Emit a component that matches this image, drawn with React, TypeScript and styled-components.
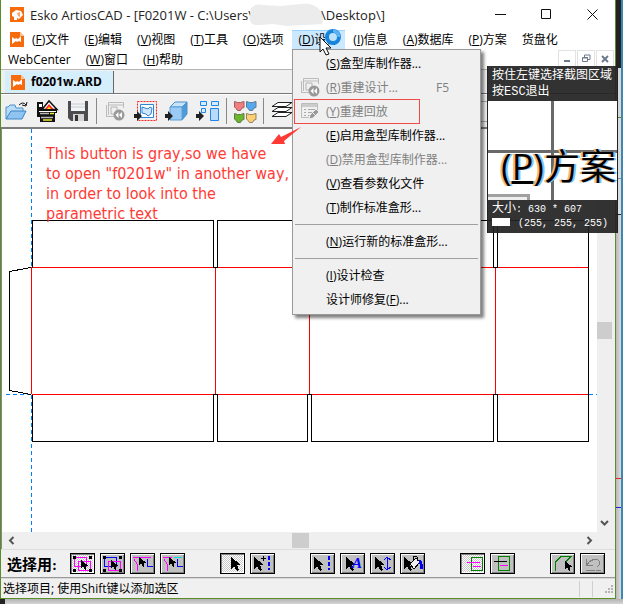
import React from "react";
import styled, { createGlobalStyle, css } from "styled-components";

const UI = '"Open Sans", "Noto Sans CJK SC", sans-serif';
const SONG = '"Liberation Serif", "Noto Sans CJK SC", serif';
const GREEN = "#5b8c2a";

const Global = createGlobalStyle`
  * { box-sizing: border-box; }
  body { margin: 0; background: #c4c4c4; font-family: ${UI}; font-size: 12px; color: #000; }
  button { font: inherit; color: inherit; background: none; border: 0; padding: 0; margin: 0; }
  svg { display: block; flex: none; }
  u { text-underline-offset: 1px; }
`;

const Desktop = styled.div`
  position: relative;
  display: grid;
  grid-template-columns: minmax(0, 1fr) 7px;
  grid-template-rows: minmax(0, 1fr) 5px;
  min-height: 100vh;
  overflow: hidden;
`;

const Win = styled.main`
  display: flex;
  flex-direction: column;
  background: #fff;
  border: solid ${GREEN};
  border-width: 0 1px 1px 1px;
`;

const Behind = styled.div`
  display: flex;
  flex-direction: column;
  border-right: 2px solid #3c88b4;
`;

const BehindPart = styled.div<{ $h?: number; $bg: string; $line?: string }>`
  ${(p) => (p.$h ? css`height: ${p.$h}px;` : css`flex: 1;`)}
  background: ${(p) => p.$bg};
  border-bottom: 1px solid ${(p) => p.$line || "transparent"};
`;

const Beneath = styled.div`
  grid-column: 1 / -1;
  background: linear-gradient(#b4b4b4, #d4d4d4);
  border-left: 5px solid #222;
`;

const TitleBar = styled.header`
  display: flex;
  align-items: center;
  height: 29px;
  padding-left: 9px;
`;

const TitleText = styled.h1`
  display: flex;
  align-items: center;
  flex: 1;
  margin: 0 0 0 6px;
  font-size: 13px;
  font-weight: 400;
  line-height: 20px;
  white-space: pre;
  color: #222;
  svg { margin: 0 -4px 0 -4px; }
`;

const Caption = styled.div`
  display: flex;
  button {
    display: grid;
    place-items: center;
    width: 46px;
    height: 28px;
  }
`;

const MenuArea = styled.div`
  display: flex;
  align-items: flex-end;
  height: 40px;
`;

const MenuBar = styled.nav`
  flex: 1;
  min-width: 0;
  height: 40px;
`;

const MenuRow = styled.div`
  display: flex;
  align-items: center;
  gap: 1px;
  height: 20px;
`;

const AppMark = styled.span`
  padding-left: 9px;
`;

const MenuButton = styled.button<{ $open?: boolean }>`
  height: 19px;
  padding: 0 7px;
  line-height: 18px;
  white-space: nowrap;
  border: 1px solid transparent;
  border-width: 1px 0 0;
  ${(p) => p.$open && css`background: #cce8ff; border-color: #99d1ff;`}
`;

const MdiButtons = styled.div`
  display: flex;
  gap: 1px;
  padding: 0 1px 2px 0;
  button {
    display: grid;
    place-items: center;
    width: 18px;
    height: 17px;
    border: 1px solid #e2e2e2;
  }
`;

const TabStrip = styled.div`
  display: flex;
  align-items: flex-end;
  height: 25px;
  padding-left: 4px;
  background: #f0f0f0;
  border-top: 1px solid #b4b4b4;
  border-bottom: 1px solid #777;
`;

const Tab = styled.button`
  display: flex;
  align-items: center;
  gap: 6px;
  height: 22px;
  padding: 0 11px 0 6px;
  background: #d5eefc;
  border-right: 1px solid #666;
  font-weight: 700;
  line-height: 20px;
`;

const ToolBar = styled.div`
  display: flex;
  align-items: center;
  gap: 7px;
  height: 35px;
  padding: 0 3px;
  background: #f0f0f0;
  border-top: 1px solid #fff;
  border-bottom: 2px solid #7c7c7c;
  overflow: hidden;
`;

const Tool = styled.button`
  display: grid;
  place-items: center;
  flex: none;
  width: 24px;
  height: 24px;
`;

const ToolRule = styled.span`
  flex: none;
  width: 1px;
  height: 26px;
  margin: 0 -1px;
  background: #888;
`;

const Spacer = styled.span`
  flex: 1;
`;

const ZoomBox = styled.select`
  width: 134px;
  height: 21px;
  border: 1px solid #aaa;
  background: #f0f0f0;
`;

const Work = styled.section`
  display: flex;
  flex: 1;
  min-height: 300px;
  border-left: 1px solid #888;
`;

const Sheet = styled.svg`
  flex: 1;
  width: 0;
  min-width: 0;
  background: #fff;
  shape-rendering: crispEdges;
`;

const VScroll = styled.div`
  display: flex;
  flex-direction: column;
  align-items: center;
  width: 18px;
  padding: 14px 3px 0 0;
  background: #efefef;
`;

const HScroll = styled.div`
  display: flex;
  align-items: center;
  justify-content: space-between;
  height: 17px;
  padding: 0 22px 0 6px;
  background: #efefef;
  border-left: 1px solid #888;
`;

const Thumb = styled.div<{ $v?: boolean }>`
  width: ${(p) => (p.$v ? 15 : 17)}px;
  height: ${(p) => (p.$v ? 17 : 15)}px;
  background: #cdcdcd;
`;

const Palette = styled.div`
  display: flex;
  align-items: center;
  height: 29px;
  padding-left: 6px;
  background: #f0f0f0;
  border-top: 1px solid #ddd;
  border-bottom: 1px solid #999;
  overflow: hidden;
`;

const PaletteLabel = styled.span`
  flex: none;
  width: 63px;
  font: 700 15px ${SONG};
`;

const Group = styled.div`
  display: flex;
  flex: none;
  gap: 5px;
  margin-right: 35px;
`;

const Pick = styled.button<{ $on?: boolean }>`
  width: 25px;
  height: 21px;
  border: 1px solid #000;
  background: ${(p) =>
    p.$on ? "repeating-conic-gradient(#c8c8c8 0 25%, #fff 0 50%) 0 0 / 2px 2px" : "#c0c0c0"};
  box-shadow: inset 1px 1px ${(p) => (p.$on ? "#808080" : "#fff")},
    inset -1px -1px ${(p) => (p.$on ? "#fff" : "#808080")};
`;

const StatusBar = styled.footer`
  display: flex;
  align-items: center;
  height: 20px;
  padding-left: 2px;
  background: #f0f0f0;
  border-top: 1px solid #d8d8d8;
  line-height: 18px;
  span { flex: 1; }
  svg { margin-right: 2px; }
`;

const StatusRule = styled.i`
  width: 1px;
  height: 16px;
  margin-right: 12px;
  background: #d0d0d0;
`;

const DropMenu = styled.div`
  position: absolute;
  left: 292px;
  top: 49px;
  width: 189px;
  padding: 1px 2px 3px;
  background: #f0f0f0;
  border: 1px solid #999;
  box-shadow: 3px 3px 3px rgba(0, 0, 0, 0.5);
`;

const Item = styled.button`
  display: grid;
  grid-template-columns: 31px 1fr 30px;
  align-items: center;
  width: 100%;
  height: 24px;
  padding-right: 12px;
  text-align: left;
  white-space: nowrap;
  &:disabled { color: #808080; }
  svg { margin-left: 5px; }
`;

const ItemRule = styled.hr`
  height: 1px;
  margin: 5px 0 4px;
  border: 0;
  background: #a0a0a0;
`;

const RedBox = styled.div`
  position: absolute;
  left: 294px;
  top: 99px;
  width: 126px;
  height: 25px;
  border: 1px solid #f14a44;
`;

const Note = styled.p`
  position: absolute;
  left: 46px;
  top: 144px;
  margin: 0;
  font: 16px/20px "DejaVu Sans Condensed", "Open Sans", sans-serif;
  color: #ff3a35;
  white-space: pre;
`;

const Over = styled.svg<{ $x: number; $y: number }>`
  position: absolute;
  left: ${(p) => p.$x}px;
  top: ${(p) => p.$y}px;
`;

const Loupe = styled.aside`
  position: absolute;
  left: 487px;
  top: 66px;
  width: 131px;
  border: solid #222;
  border-width: 0 1px;
`;

const LoupeText = styled.div`
  height: 35px;
  padding: 2px 0 0 4px;
  background: rgba(34, 34, 34, 0.92);
  color: #fff;
  font: 12px/16px "Liberation Mono", "Noto Sans CJK SC", monospace;
  white-space: pre;
`;

const LoupeInfo = styled(LoupeText)`
  height: 33px;
  padding-top: 2px;
  font-size: 10px;
  line-height: 14px;
`;

const Hanzi = styled.span`
  font-size: 12px;
`;

const Swatch = styled.i`
  display: inline-block;
  width: 18px;
  height: 8px;
  margin-right: 8px;
  background: #fff;
`;

const LoupeView = styled.div`
  display: flex;
  align-items: flex-end;
  height: 99px;
  padding: 0 0 9px 13px;
  overflow: hidden;
  font-size: 36px;
  line-height: 48px;
  white-space: nowrap;
  text-shadow: -2px 0 #f3b877, 2px 0 #7cc4f5;
  background:
    linear-gradient(#696969, #696969) 63px 0 / 3px 100% no-repeat,
    linear-gradient(#696969, #696969) 0 49px / 100% 3px no-repeat,
    linear-gradient(#eee, #eee) 0 100% / 39px 3px no-repeat,
    linear-gradient(#a0a0a0, #a0a0a0) 0 100% / 42px 6px no-repeat,
    #fff;
  u { text-decoration-thickness: 3px; }
`;

const Esko = ({ round }: { round?: boolean }) => (
  <svg width="14" height="15" viewBox="0 0 14 15">
    <path d={round ? "M0 0h14v15H0z" : "M0 0h10l4 4v11H0z"} fill="#f76b0c" />
    {round ? (
      <>
        <path d="M2 6l4-3 5 1 2 4-4 4-2-1v2H4v-3L2 9z" fill="#fff" />
        <path d="M7 6l3-1v5L8 9z" fill="#f9a66c" />
      </>
    ) : (
      <>
        <path d="M10 0l4 4h-4z" fill="#ffc59b" />
        <path d="M2 5l3 2 1-1 2 1 3-3v6L9 9l-2 1-1-1-4 3z" fill="#fff" />
      </>
    )}
  </svg>
);

const Glyph = ({ d, w = 11, h = 11, s = 1, c = "#111" }: { d: string; w?: number; h?: number; s?: number; c?: string }) => (
  <svg width={w} height={h} fill="none" stroke={c} strokeWidth={s}><path d={d} /></svg>
);

const RebuildIcon = () => (
  <svg width="20" height="20" viewBox="0 0 20 20" fill="none">
    <path d="M3.5 14V1.5h15V7M1.5 16V4M1 15.5h8M3 4h15" stroke="#bbb" />
    <path d="M6 6h6v3M6 6v7h3" stroke="#b4b4b4" />
    <circle cx="14" cy="14" r="5.5" fill="#999" />
    <path d="M10.500 14l3-3v6zM14 14l3-3v6z" fill="#fff" />
  </svg>
);

const ReplayIcon = () => (
  <svg width="20" height="20" viewBox="0 0 20 20" fill="none">
    <path d="M1.500 2.500h16v8M1.500 2.500v14h8" stroke="#bbb" />
    <path d="M2 4.500h15" stroke="#ccc" strokeWidth="3" />
    <path d="M4 8.500h2M4 11.500h2M4 14.500h2M8 8.500h7M8 11.500h4M8 14.500h2" stroke="#aaa" />
    <path d="M9 18l1-4 6-6 3 3-6 6z" fill="#999" stroke="#eee" />
    <path d="M12 11l3 3" stroke="#eee" />
  </svg>
);

const S = ({ children }: { children: React.ReactNode }) => (
  <svg width="24" height="24" viewBox="0 0 24 24" fill="none">{children}</svg>
);
const Handle = () => <path d="M0 15h3v-3l5 5-5 5v-3H0z" fill="#222" />;
const Blob = ({ x, y, f, s }: { x: number; y: number; f: string; s: string }) => (
  <path d="M.5 .5l3 1h3l3.500-1v6l-2 .5-1.500 2.500h-3L2 7.500 .5 6z" fill={f} stroke={s} transform={`translate(${x} ${y})`} />
);

const tools: [string, React.ReactNode][] = [
  ["打开", <S><path d="M2 20V8h2l2-2h5l1 3h7v3" fill="#b8dcf8" stroke="#4a90cc" /><path d="M2 20l5-8h15l-4 8z" fill="#8fc4f2" stroke="#3c84c4" /><path d="M15 6q4-4 7 0M23 3l-1 4-4-1" stroke="#111" /></S>],
  ["打印", <S>
    <path d="M2 3h6v6h14v5h-2v9H5v-5H2z" fill="#111" />
    <path d="M4 5h3v3H4z" fill="#fff" />
    <path d="M7 10.500L14 2l8 8.500z" fill="#fff" stroke="#111" strokeWidth="1.500" />
    <path d="M10 10l4-5 4.500 5z" fill="#f22" />
    <path d="M12 10l2-2.500 2 2.500z" fill="#fd0" />
    <path d="M4 12.500h17" stroke="#fff" />
    <path d="M5 14.500h9M6 18.500h12" stroke="#b8b8b8" strokeWidth="1.500" />
    <path d="M15 14.500h4M8 21h9" stroke="#ee3" strokeWidth="1.500" />
  </S>],
  ["保存", <S><path d="M2 2h20v20H5l-3-3z" fill="#4c4c50" /><path d="M5 2h14v10H5z" fill="#f2f4f6" /><path d="M5 5h14M5 8h14" stroke="#c6ccd2" /><path d="M7 15h11v7H7z" fill="#d4d4d4" /><path d="M9 16h3v6H9z" fill="#333" /></S>],
  ["", null],
  ["重建", <RebuildIcon />],
  ["选择", <S><path d="M3.500 2.500h19v19h-19z" stroke="#f22" strokeDasharray="2 1" /><path d="M6.500 5.500h13v13h-13z" fill="#fff" stroke="#2f86d8" /><path d="M8 8l3 1 3 1 2-2 2 1-1 6-3 2-2-2-4-1z" fill="#cfe6fb" stroke="#2f86d8" /><Handle /></S>],
  ["三维", <S><path d="M5 8l5-5h12l-5 5z" fill="#c7e4fb" stroke="#4a90cc" /><path d="M17 8l5-5v12l-5 6z" fill="#4f9ad8" stroke="#4a90cc" /><path d="M5 8h12v13H5z" fill="#9bcbf4" stroke="#5aa0dc" /><Handle /></S>],
  ["排列", <S><path d="M4.500 2.500h6v4h-6zM15.500 2.500h7v4h-7zM5.500 9.500h4v4h-4z" fill="#d7ebfc" stroke="#1f86ea" /><path d="M14.500 9.500h8v12h-8z" fill="#b9dafa" stroke="#1f86ea" /><Handle /></S>],
  ["", null],
  ["拼版", <S><Blob x={1} y={2} f="#f47c7c" s="#9a6060" /><Blob x={13} y={2} f="#54a8ee" s="#5c7c98" /><Blob x={1} y={14} f="#6cb52d" s="#5c7c48" /><Blob x={13} y={14} f="#fcd070" s="#94805c" /></S>],
  ["", null],
  ["图层", <S><path d="M2 17.500l6-4h14l-6 4zM2 12.500l6-4h14l-6 4zM2 7.500l6-4h14l-6 4z" fill="#fff" stroke="#222" /></S>],
];

const ARROW = "M0 0v12l3-3 3 5 2-1-2-5h4z";
const P = ({ on, label, children }: { on?: boolean; label: string; children: React.ReactNode }) => (
  <Pick $on={on} aria-label={label}>
    <svg width="23" height="19" fill="none" shapeRendering="crispEdges">{children}</svg>
  </Pick>
);
const Arrow = ({ x, y = 3, k = 1 }: { x: number; y?: number; k?: number }) => (
  <path d={ARROW} fill="#000" transform={`translate(${x} ${y}) scale(${k})`} />
);
const Dots = () => <path d="M18 2v14" stroke="#00f" strokeWidth="2" strokeDasharray="4 2" />;
const Corners = ({ a, b }: { a: string; b: string }) => (
  <>
    <path d="M3.500 3.500h12v9h-12z" stroke={a} />
    <path d="M7.500 7.500h12v9h-12z" stroke={b} />
    <path d="M2 2h3v3H2zM18 2h3v3h-3zM2 15h3v3H2zM18 15h3v3h-3z" fill="#000" />
    <Arrow x={10} y={6} k={0.7} />
  </>
);

const sections: React.ReactNode[] = [
  <>
    <P on label="选择全部"><Corners a="#f0f" b="#f0f" /></P>
    <P label="选择组"><Corners a="#00f" b="#f0f" /></P>
    <P label="选择线"><path d="M2 3.500h18M3 5l3 5v7" stroke="#f0f" /><path d="M16.500 5v7h5" stroke="#00f" /><Arrow x={8} y={3} k={0.7} /></P>
    <P label="选择段"><path d="M2 3.500h9M3 5l3 5v7" stroke="#f0f" /><path d="M13 3.500h8" stroke="#0dd" /><path d="M16.500 5v7h5" stroke="#00f" /><Arrow x={8} y={3} k={0.7} /></P>
  </>,
  <>
    <P on label="选取"><Arrow x={10} /></P>
    <P label="添加选取"><Arrow x={3} /><path d="M12.500 2v5M10 4.500h5" stroke="#000" /><Dots /></P>
  </>,
  <>
    <P label="选线"><Arrow x={3} /><Dots /></P>
    <P label="选文字"><Arrow x={5} /><text x="11" y="14" fill="#00f" fontFamily="Liberation Serif" fontSize="15" fontStyle="italic" fontWeight="700">A</text></P>
    <P label="选尺寸"><Arrow x={4} /><path d="M16.500 3v13M13 6l3-3 4 3M13 13l3 3 4-3" stroke="#00f" /></P>
    <P label="选填充"><Arrow x={3} /><path d="M9 10l6-6 4 4-6 7z" fill="#eee" stroke="#000" /><path d="M12 6V3q2-2 4 0v4" stroke="#000" /><path d="M18 7q3 1 2 8" stroke="#00f" strokeWidth="3" /></P>
  </>,
  <>
    <P on label="重叠"><path d="M10.500 3.500h11v13h-11z" stroke="#008000" /><path d="M6 8.500h13M12 12.500h8" stroke="#f0f" /></P>
    <P label="内部"><path d="M7.500 2.500h11v14h-11z" stroke="#008000" /><path d="M3 7.500h13" stroke="#000" /><path d="M9 11.500h8" stroke="#f0f" /></P>
  </>,
  <>
    <P label="多边形"><path d="M4.500 17V8l6-6h10l-6 6" stroke="#008000" /><Arrow x={14} y={7} k={0.7} /></P>
    <P label="撤消"><path d="M5.500 5v6h6M6 11q4-7 11-5q4 3-1 7M5 16.500h9M15 16.500h5" stroke="#808080" /></P>
  </>,
];

const Mn = ({ k, children }: { k: string; children?: React.ReactNode }) => <span>(<u>{k}</u>){children}</span>;

export default function App() {
  const flap = (x1: number, x2: number, y: number, b: number) => `M${x1}.5 ${y}.5V${b}.5H${x2}.5V${y}.5`;
  const panels = [[32, 213], [217, 307], [311, 493], [497, 588]];
  return (
    <Desktop>
      <Global />
      <Win>
        <TitleBar>
          <Esko round />
          <TitleText>
            Esko ArtiosCAD - [F0201W - C:\Users\
            <svg width="76" height="24"><path d="M2 5q5-5 12-3l18 1 20-2q12-1 18 5q6 7 3 15l-16 1-20 1-13-2-13 1Q-1 23 1 13z" fill="#ececec" /></svg>
            \Desktop\]
          </TitleText>
          <Caption>
            <button aria-label="最小化"><Glyph d="M0 5.500h11" /></button>
            <button aria-label="最大化"><Glyph d="M.5 .5h9v9h-9z" /></button>
            <button aria-label="关闭"><Glyph d="M.5 .5l10 10M10.500 .5l-10 10" /></button>
          </Caption>
        </TitleBar>
        <MenuArea>
          <MenuBar>
            <MenuRow>
              <AppMark><Esko /></AppMark>
              {[["F", "文件"], ["E", "编辑"], ["V", "视图"], ["T", "工具"], ["O", "选项"], ["D", "设计"], ["I", "信息"], ["A", "数据库"], ["P", "方案"]].map(([k, t]) => (
                <MenuButton key={k} $open={k === "D"}><Mn k={k}>{t}</Mn></MenuButton>
              ))}
              <MenuButton>货盘化</MenuButton>
            </MenuRow>
            <MenuRow>
              <MenuButton>WebCenter</MenuButton>
              <MenuButton><Mn k="W">窗口</Mn></MenuButton>
              <MenuButton><Mn k="H">帮助</Mn></MenuButton>
            </MenuRow>
          </MenuBar>
          <MdiButtons>
            <button aria-label="最小化文档"><Glyph w={8} h={8} d="M1 6h6" s={2} c="#6c7a8c" /></button>
            <button aria-label="还原文档"><Glyph w={9} h={9} d="M2.500 3V1H8v4.500H6M.5 3.500h5v4h-5zM1 4h5" c="#6c7a8c" /></button>
            <button aria-label="关闭文档"><Glyph w={8} h={8} d="M1 1l6 6M7 1L1 7" s={2} c="#6c7a8c" /></button>
          </MdiButtons>
        </MenuArea>
        <TabStrip><Tab><Esko />f0201w.ARD</Tab></TabStrip>
        <ToolBar>
          {tools.map(([name, art], i) => (name ? <Tool key={i} aria-label={name}>{art}</Tool> : <ToolRule key={i} />))}
          <Spacer />
          <ZoomBox aria-label="图层选择" />
        </ToolBar>
        <Work>
          <Sheet>
            <g transform="translate(-2 -129)" fill="none">
              <path d="M31.500 129V532M6 394.500h26M589 394.500h9" stroke="#0080ff" strokeDasharray="4 3" />
              <path d="M31.500 267.500H588M31.500 394.500H588M31.500 267v127M215.500 267v127M309.500 267v127M495.500 267v127" stroke="#f00" />
              {panels.map(([a, b]) => (
                <path key={a} d={`${flap(a, b, 267, 220)} ${flap(a, b, 394, 441)}`} stroke="#000" />
              ))}
              <path d="M213 267.500h5M307 267.500h5M493 267.500h5M213 394.500h5M307 394.500h5M493 394.500h5M588.500 220V441M31 267.500L9.500 271.500V390.500L31 394.500" stroke="#000" />
            </g>
          </Sheet>
          <VScroll>
            <Spacer />
            <Thumb $v />
            <Spacer />
            <Glyph w={9} h={14} d="M1 3l3.500 3.500L8 3" s={2} c="#555" />
          </VScroll>
        </Work>
        <HScroll>
          <Glyph w={7} h={9} d="M5.500 1L2 4.500 5.500 8" s={2} c="#555" />
          <Thumb />
          <Glyph w={7} h={9} d="M1.500 1L5 4.500 1.500 8" s={2} c="#555" />
        </HScroll>
        <Palette>
          <PaletteLabel>选择用:</PaletteLabel>
          {sections.map((s, i) => <Group key={i}>{s}</Group>)}
        </Palette>
        <StatusBar>
          <span>选择项目; 使用Shift键以添加选区</span>
          <StatusRule />
          <StatusRule />
          <svg width="8" height="8" fill="#b4b4b4"><path d="M6 0h2v2H6zM3 3h2v2H3zM6 3h2v2H6zM0 6h2v2H0zM3 6h2v2H3zM6 6h2v2H6z" /></svg>
        </StatusBar>
      </Win>
      <Behind>
        <BehindPart $h={68} $bg="#222" />
        <BehindPart $h={50} $bg="#d8d8d8" $line={GREEN} />
        <BehindPart $h={61} $bg="#dcdcdc" $line="#888" />
        <BehindPart $h={36} $bg="#dcdcdc" $line="#222" />
        <BehindPart $h={264} $bg="linear-gradient(90deg, #b8b8b8, #ddd)" $line="#e22" />
        <BehindPart $h={29} $bg="linear-gradient(90deg, #b8b8b8, #ddd)" $line="#22d" />
        <BehindPart $bg="linear-gradient(90deg, #b8b8b8, #ddd)" />
      </Behind>
      <Beneath />

      <Note>{'This button is gray,so we have\nto open "f0201w" in another way,\nin order to look into the\nparametric text'}</Note>
      <DropMenu role="menu">
        <Item><i /><Mn k="S">盒型库制作器...</Mn></Item>
        <Item disabled><RebuildIcon /><Mn k="R">重建设计...</Mn><span>F5</span></Item>
        <Item disabled><ReplayIcon /><Mn k="Y">重建回放</Mn></Item>
        <Item><i /><Mn k="E">启用盒型库制作器...</Mn></Item>
        <Item disabled><i /><Mn k="D">禁用盒型库制作器...</Mn></Item>
        <Item><i /><Mn k="V">查看参数化文件</Mn></Item>
        <Item><i /><Mn k="T">制作标准盒形...</Mn></Item>
        <ItemRule />
        <Item><i /><Mn k="N">运行新的标准盒形...</Mn></Item>
        <ItemRule />
        <Item><i /><Mn k="I">设计检查</Mn></Item>
        <Item><i /><span>设计师修复(<u>F</u>)...</span></Item>
      </DropMenu>
      <RedBox />
      <Over $x={270} $y={127} width="32" height="18"><path d="M1 17L9 7l2 3L31 0 14 14l1 3z" fill="#ff3a35" /></Over>
      <Over $x={318} $y={27} width="26" height="30">
        <circle cx="15" cy="10" r="6" fill="#bde3fb" stroke="#1884dc" strokeWidth="4" />
        <path d="M15 4a6 6 0 0 1 6 6" fill="none" stroke="#5db4f2" strokeWidth="3" />
        <path d="M2 10v15l3-3 3 6 3-1-3-6h5z" fill="#fff" stroke="#111" />
      </Over>
      <Loupe>
        <LoupeText>{"按住左键选择截图区域\n按ESC退出"}</LoupeText>
        <LoupeView><Mn k="P">方案</Mn></LoupeView>
        <LoupeInfo><Hanzi>大小</Hanzi>{": 630 * 607\n"}<Swatch />(255, 255, 255)</LoupeInfo>
      </Loupe>
    </Desktop>
  );
}
